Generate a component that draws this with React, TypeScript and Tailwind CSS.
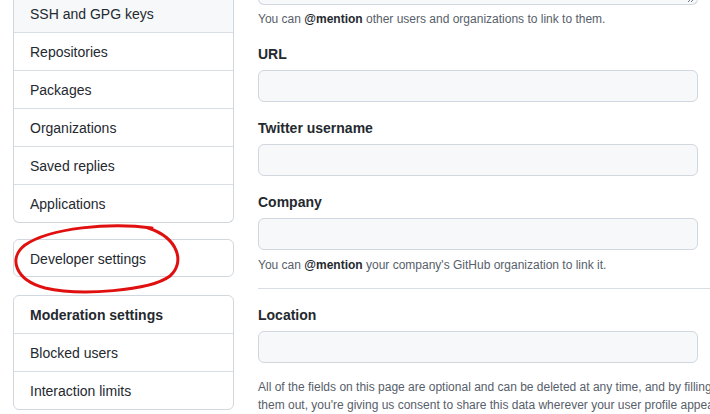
import React from 'react';

const font = { fontFamily: '"Liberation Sans", Arial, sans-serif' };

function NavItem({ label, active, heading, last, h = 'h-[38px]' }: { label: string; active?: boolean; heading?: boolean; last?: boolean; h?: string }) {
  return (
    <div
      className={`${h} flex items-center px-4 pt-[2px] text-[14px] text-[#24292f] ${heading ? 'font-bold' : ''} ${active ? 'bg-[#f6f8fa]' : ''} ${last ? '' : 'border-b border-[#d8dee4]'}`}
    >
      {label}
    </div>
  );
}

function Field({ label, note }: { label: string; note?: React.ReactNode }) {
  return (
    <div className="flex flex-col">
      <label className="text-[14px] font-bold text-[#24292f] h-[20px] leading-[20px] mb-[6px]">{label}</label>
      <div className="h-[32px] rounded-[6px] border border-[#d0d7de] bg-[#f6f8fa]" />
      {note && <p className="text-[12px] text-[#57606a] mt-[6px] leading-[18px]">{note}</p>}
    </div>
  );
}

export default function App() {
  return (
    <div className="relative w-[710px] h-[414px] overflow-hidden bg-white" style={font}>
      <div className="flex gap-6 pl-[13px] -mt-[5px]">
        {/* Sidebar */}
        <div className="w-[221px] shrink-0 flex flex-col">
          <div className="border border-t-0 border-[#d0d7de] rounded-b-[6px] overflow-hidden">
            <NavItem label="SSH and GPG keys" active />
            <NavItem label="Repositories" />
            <NavItem label="Packages" />
            <NavItem label="Organizations" />
            <NavItem label="Saved replies" />
            <NavItem label="Applications" last h="h-[37px]" />
          </div>
          <div className="mt-[16px] border border-[#d0d7de] rounded-[6px]">
            <NavItem label="Developer settings" last h="h-[36px]" />
          </div>
          <div className="mt-[18px] border border-[#d0d7de] rounded-[6px]">
            <NavItem label="Moderation settings" heading />
            <NavItem label="Blocked users" />
            <NavItem label="Interaction limits" last h="h-[37px]" />
          </div>
        </div>

        {/* Main */}
        <div className="flex-1 min-w-0">
          <div className="relative h-[10px] mr-[12px] rounded-b-[6px] border border-t-0 border-[#d0d7de] bg-[#f6f8fa]">
            <svg className="absolute right-[2px] bottom-[1px]" width="8" height="8" viewBox="0 0 8 8">
              <path d="M7 1 L1 7 M7 4 L4 7" stroke="#6e7781" strokeWidth="1" />
            </svg>
          </div>
          <p className="text-[12px] text-[#57606a] mt-[5px] leading-[18px]">
            You can <span className="font-bold text-[#24292f]">@mention</span> other users and organizations to link to them.
          </p>
          <div className="mt-[16px] mr-[12px] flex flex-col gap-[16px]">
            <Field label="URL" />
            <Field label="Twitter username" />
            <Field
              label="Company"
              note={
                <>
                  You can <span className="font-bold text-[#24292f]">@mention</span> your company's GitHub organization to link it.
                </>
              }
            />
          </div>
          <div className="border-t border-[#d8dee4] mt-[14px]" />
          <div className="mt-[16px] mr-[12px]">
            <Field label="Location" />
          </div>
          <p className="text-[12px] text-[#57606a] mt-[15px] leading-[18px] w-[478px]">
            All of the fields on this page are optional and can be deleted at any time, and by filling them out, you're giving us consent to share this data wherever your user profile appears.
          </p>
        </div>
      </div>

      {/* red annotation */}
      <svg className="absolute left-0 top-0 pointer-events-none" width="710" height="414">
        <path
          d="M152 228 C110 222, 50 228, 25 245 C8 258, 15 280, 45 288 C80 296, 150 291, 170 276 C185 263, 179 238, 148 228"
          fill="none"
          stroke="#e01010"
          strokeWidth="3"
          strokeLinecap="round"
        />
      </svg>
    </div>
  );
}
